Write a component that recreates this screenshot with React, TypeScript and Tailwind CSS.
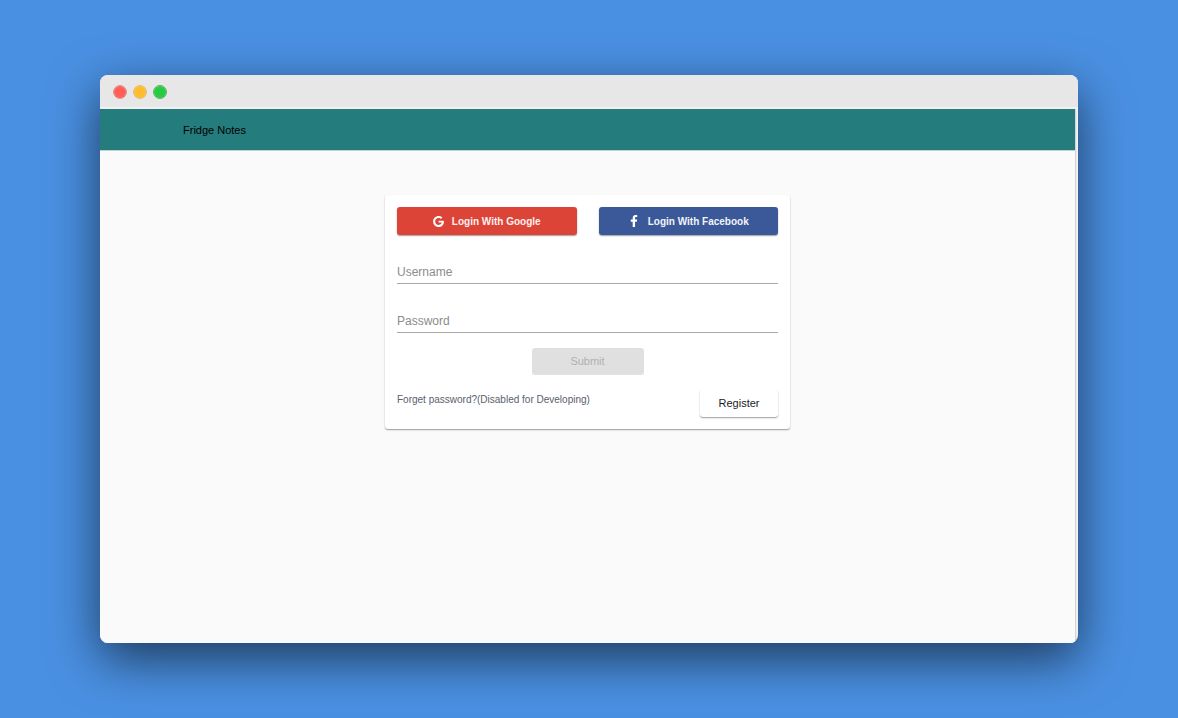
import React, { useState } from "react";
import { FaFacebookF } from "react-icons/fa";

const raised =
  "shadow-[0_1px_1px_rgba(0,0,0,0.22),0_1px_2px_rgba(0,0,0,0.2)]";

function GoogleIcon() {
  return (
    <svg viewBox="0 0 24 24" className="size-[11px] fill-white" aria-hidden="true">
      <path d="M12.24 10.285V14.4h6.806c-.275 1.765-2.056 5.174-6.806 5.174-4.095 0-7.439-3.389-7.439-7.574s3.345-7.574 7.439-7.574c2.33 0 3.891.989 4.785 1.849l3.254-3.138C18.189 1.186 15.479 0 12.24 0c-6.635 0-12 5.365-12 12s5.365 12 12 12c6.926 0 11.52-4.869 11.52-11.726 0-.788-.085-1.39-.189-1.989H12.24z" />
    </svg>
  );
}

function TitleBar() {
  return (
    <div className="flex h-8 items-center gap-2 bg-[#e7e7e7] px-3.5 pt-0.5">
      <span className="size-3 rounded-full bg-[#ff5f57] outline outline-[#e0524b]/60" />
      <span className="size-3 rounded-full bg-[#ffbd2e] outline outline-[#dea030]/60" />
      <span className="size-3 rounded-full bg-[#28ca41] outline outline-[#24a838]/80" />
    </div>
  );
}

function Field({ id, label, type }: { id: string; label: string; type: string }) {
  const [value, setValue] = useState("");
  return (
    <div className="grid h-7 border-b border-[#a8a8a8]">
      <label
        htmlFor={id}
        className={`col-start-1 row-start-1 pt-1.5 text-[12px] leading-5 text-[#8c8c8c] ${value ? "invisible" : ""}`}
      >
        {label}
      </label>
      <input
        id={id}
        type={type}
        value={value}
        onChange={(event) => setValue(event.target.value)}
        className="col-start-1 row-start-1 w-full bg-transparent pt-1 text-[12px] leading-5 text-[#333] outline-none"
      />
    </div>
  );
}

function LoginCard() {
  return (
    <form
      onSubmit={(event) => event.preventDefault()}
      className={`w-full max-w-[405px] rounded-[3px] bg-white p-3 ${raised}`}
    >
      <div className="grid grid-cols-2 gap-[22px]">
        <button
          type="button"
          className={`flex h-7 items-center justify-center gap-2 rounded-[3px] bg-[#dd4438] text-[10px] font-bold text-[#fdf0ef] ${raised}`}
        >
          <GoogleIcon />
          Login With Google
        </button>
        <button
          type="button"
          className={`flex h-7 items-center justify-center gap-2 rounded-[3px] bg-[#3b5998] text-[10px] font-bold text-[#f2f4fa] ${raised}`}
        >
          <FaFacebookF className="size-3 text-white" />
          Login With Facebook
        </button>
      </div>
      <div className="mt-[21px] flex flex-col gap-[21px]">
        <Field id="username" label="Username" type="text" />
        <Field id="password" label="Password" type="password" />
      </div>
      <button
        type="submit"
        disabled
        className="mx-auto mt-[15px] block h-[27px] w-28 rounded-[3px] bg-[#e0e0e0] text-[11px] text-[#b0b0b0]"
      >
        Submit
      </button>
      <div className="mt-[15px] flex items-start justify-between">
        <a href="#forgot" className="pt-0.5 text-[10px] leading-4 text-[#59616b]">
          Forget password?(Disabled for Developing)
        </a>
        <button
          type="button"
          className={`h-[27px] w-[78px] rounded-[3px] bg-white text-[11px] text-[#222] ${raised}`}
        >
          Register
        </button>
      </div>
    </form>
  );
}

export default function App() {
  return (
    <div className="flex min-h-screen flex-col bg-[#4a90e2] px-[100px] py-[75px] font-['Liberation_Sans',Arial,sans-serif]">
      <div className="flex flex-1 flex-col overflow-hidden rounded-lg bg-[#f2f2f2] shadow-[0_16px_50px_rgba(0,0,0,0.6)]">
        <TitleBar />
        <div className="mt-0.5 mr-[3px] flex flex-1 flex-col bg-[#fafafa] shadow-[1px_0_1px_#d4d4d4]">
          <header className="box-content flex h-[41px] items-center border-b border-[#b9d4d4] bg-[#247d7c] px-[83px]">
            <h1 className="text-[11px] leading-4 text-black">Fridge Notes</h1>
          </header>
          <main className="flex justify-center px-4 pt-11 pb-8">
            <LoginCard />
          </main>
        </div>
      </div>
    </div>
  );
}
